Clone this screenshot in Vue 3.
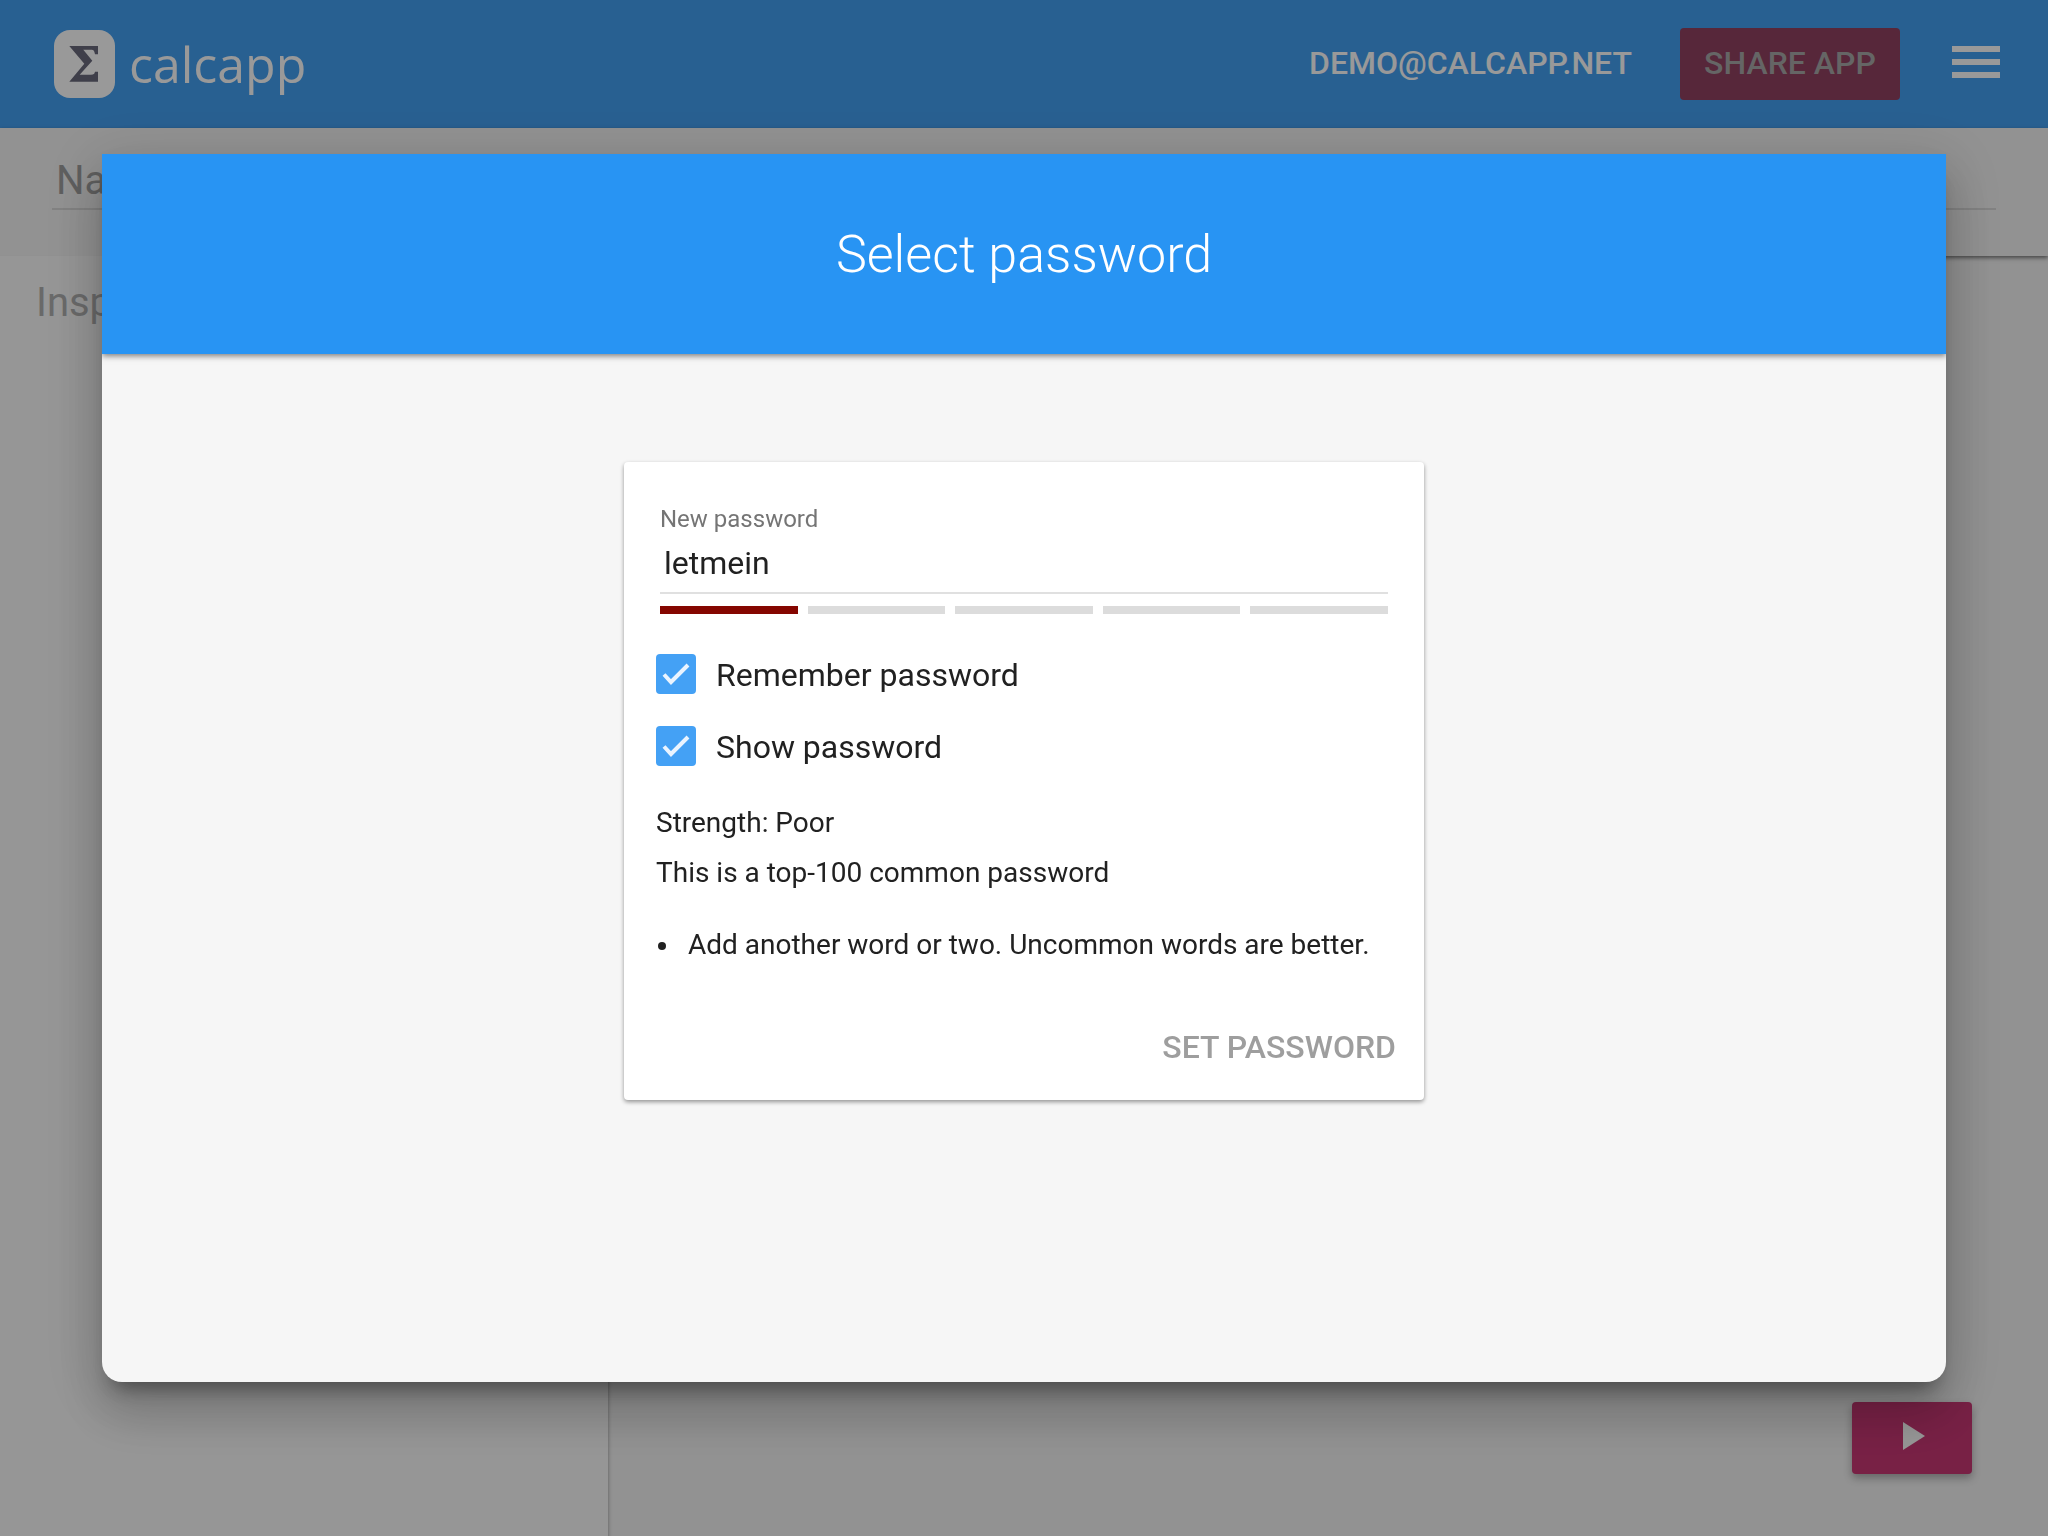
<script setup>
import { ref } from 'vue'

const password = ref('letmein')
const remember = ref(true)
const show = ref(true)
const appName = ref('')
const score = 1
</script>

<template>
  <div class="app">
    <header class="topbar">
      <a class="brand" href="#">
        <svg class="brand-mark" viewBox="0 0 61 68" aria-hidden="true">
          <rect width="61" height="68" rx="16" fill="#ffffff" />
          <path
            d="M15.3 16H44v8.3h-3C40.4 21 39.8 19.700 37 19.700H29.300L38.300 30.700 25.700 44.700H37C39.800 44.700 40.400 44 41 41.700h3v10H15.300L30.300 33.700Z"
            fill="#6a6a7c"
          />
        </svg>
        <span class="brand-name">calcapp</span>
      </a>
      <nav class="top-actions">
        <button class="account" type="button">DEMO@CALCAPP.NET</button>
        <button class="share" type="button" disabled>SHARE APP</button>
        <button class="menu" type="button" aria-label="Menu">
          <svg viewBox="0 0 48 32" aria-hidden="true">
            <path d="M0 0H48V6H0ZM0 13H48V19H0ZM0 26H48V32H0Z" fill="#ffffff" />
          </svg>
        </button>
      </nav>
    </header>

    <div class="namebar">
      <input v-model="appName" class="name-input" type="text" placeholder="Name" aria-label="Name" />
    </div>

    <div class="workspace">
      <aside class="inspector">
        <h2>Inspector</h2>
      </aside>
      <main class="canvas">
        <button class="play" type="button" aria-label="Run app">
          <svg viewBox="0 0 22 28" aria-hidden="true"><path d="M0 0 22 14 0 28Z" fill="#fafafa" /></svg>
        </button>
      </main>
    </div>

    <div class="overlay">
      <section class="dialog" role="dialog" aria-labelledby="dialog-title">
        <header class="dialog-header">
          <h1 id="dialog-title">Select password</h1>
        </header>
        <div class="dialog-body">
          <form class="card" @submit.prevent>
            <div class="field">
              <label for="new-password">New password</label>
              <input id="new-password" v-model="password" :type="show ? 'text' : 'password'" />
              <div class="meter">
                <span v-for="n in 5" :key="n" :class="{ filled: n <= score }"></span>
              </div>
            </div>

            <div class="options">
              <label class="option">
                <input v-model="remember" type="checkbox" />
                <span class="box">
                  <svg v-if="remember" viewBox="0 0 40 40"><path d="M8 20.500 15 28 32 11" /></svg>
                </span>
                <span class="option-text">Remember password</span>
              </label>
              <label class="option">
                <input v-model="show" type="checkbox" />
                <span class="box">
                  <svg v-if="show" viewBox="0 0 40 40"><path d="M8 20.500 15 28 32 11" /></svg>
                </span>
                <span class="option-text">Show password</span>
              </label>
            </div>

            <div class="feedback">
              <p>Strength: Poor</p>
              <p>This is a top-100 common password</p>
              <ul>
                <li>Add another word or two. Uncommon words are better.</li>
              </ul>
            </div>

            <div class="card-actions">
              <button type="submit" disabled>SET PASSWORD</button>
            </div>
          </form>
        </div>
      </section>
    </div>
  </div>
</template>

<style>
body {
  margin: 0;
}
</style>

<style scoped>
* {
  box-sizing: border-box;
}

.app {
  display: flex;
  flex-direction: column;
  min-height: 100vh;
  background: #f3f3f3;
  color: #212121;
  font-family: Roboto, sans-serif;
}

button,
input {
  margin: 0;
  border: 0;
  font-family: inherit;
}

h1,
h2,
p,
ul {
  margin: 0;
}

.topbar {
  display: flex;
  align-items: center;
  justify-content: space-between;
  height: 128px;
  padding: 0 48px 0 54px;
  background: #44a0f2;
}

.brand {
  display: flex;
  align-items: center;
  gap: 14px;
  color: #ffffff;
  text-decoration: none;
}

.brand-mark {
  width: 61px;
  height: 68px;
}

.brand-name {
  font: 500 50px/68px "Open Sans", sans-serif;
}

.top-actions {
  display: flex;
  align-items: center;
}

.top-actions button {
  height: 72px;
  font-size: 32px;
  font-weight: 500;
}

.account {
  padding: 0 16px 2px;
  background: none;
  color: #ffffff;
}

.share {
  width: 220px;
  margin: 0 52px 0 32px;
  padding: 0 0 2px;
  border-radius: 4px;
  background: #914161;
  color: #a8a8a8;
}

.menu {
  display: flex;
  align-items: center;
  padding: 0 0 4px;
  background: none;
}

.menu svg {
  width: 48px;
  height: 32px;
}

.namebar {
  height: 128px;
  padding: 24px 52px 0;
  background: #f3f3f3;
  box-shadow: 0 2px 4px rgba(0, 0, 0, 0.5);
}

.name-input {
  width: 100%;
  height: 58px;
  padding: 0 4px;
  border-bottom: 2px solid #d8d8d8;
  background: none;
  font-size: 40px;
}

.name-input::placeholder {
  color: #9e9e9e;
}

.workspace {
  display: flex;
  flex: 1;
}

.inspector {
  position: relative;
  width: 608px;
  padding: 23px 36px;
  background: #fafafa;
  box-shadow: 0 4px 4px rgba(0, 0, 0, 0.4);
}

.inspector h2 {
  color: #b0b0b0;
  font-size: 40px;
  font-weight: 400;
  line-height: 48px;
}

.canvas {
  display: flex;
  flex: 1;
  align-items: flex-end;
  justify-content: flex-end;
  padding: 0 76px 62px;
}

.play {
  display: flex;
  align-items: center;
  justify-content: center;
  width: 120px;
  height: 72px;
  padding: 0 0 4px 4px;
  border-radius: 4px;
  background: #c83774;
  box-shadow: 0 4px 8px rgba(0, 0, 0, 0.3);
}

.play svg {
  width: 22px;
  height: 28px;
}

.overlay {
  position: fixed;
  inset: 0;
  display: flex;
  align-items: center;
  justify-content: center;
  background: rgba(0, 0, 0, 0.4);
}

.dialog {
  display: flex;
  flex-direction: column;
  width: 90%;
  height: 80%;
  overflow: hidden;
  border-radius: 0 0 20px 20px;
  background: #f6f6f6;
  box-shadow:
    0 32px 48px 4px rgba(0, 0, 0, 0.14),
    0 12px 60px 10px rgba(0, 0, 0, 0.12),
    0 16px 20px -10px rgba(0, 0, 0, 0.4);
}

.dialog-header {
  display: flex;
  flex: none;
  align-items: center;
  justify-content: center;
  height: 200px;
  padding-top: 2px;
  background: #2894f3;
  box-shadow: 0 2px 6px rgba(0, 0, 0, 0.5);
}

.dialog-header h1 {
  color: #ffffff;
  font-size: 52px;
  font-weight: 300;
  line-height: 64px;
}

.dialog-body {
  padding: 108px 32px 32px;
}

.card {
  max-width: 800px;
  margin: 0 auto;
  padding: 43px 0 17px;
  border-radius: 4px;
  background: #ffffff;
  box-shadow: 0 2px 4px rgba(0, 0, 0, 0.4);
}

.field {
  display: flex;
  flex-direction: column;
  padding: 0 36px;
}

.field label {
  margin-bottom: 7px;
  color: #757575;
  font-size: 24px;
  line-height: 28px;
}

.field input {
  padding: 4px 4px 10px;
  border-bottom: 2px solid #e0e0e0;
  background: none;
  color: #212121;
  font-size: 32px;
  line-height: 38px;
}

.meter {
  display: flex;
  gap: 10px;
  margin-top: 12px;
}

.meter span {
  flex: 1;
  height: 8px;
  background: #dcdcdc;
}

.meter .filled {
  background: #850600;
}

.options {
  display: flex;
  flex-direction: column;
  gap: 32px;
  padding: 40px 32px 32px;
}

.option {
  position: relative;
  display: flex;
  gap: 20px;
  height: 40px;
  font-size: 32px;
  line-height: 42px;
}

.option input {
  position: absolute;
  width: 40px;
  height: 40px;
  opacity: 0;
}

.box {
  width: 40px;
  height: 40px;
  border-radius: 4px;
  background: #44a1f5;
}

.box svg {
  display: block;
  fill: none;
  stroke: #eaf4ff;
  stroke-width: 4;
}

.feedback {
  padding: 0 32px;
  font-size: 28px;
  line-height: 50px;
}

.feedback ul {
  margin-top: 22px;
  padding: 0;
  list-style: none;
}

.feedback li {
  display: flex;
  align-items: center;
}

.feedback li::before {
  flex: none;
  width: 8px;
  height: 8px;
  margin: 2px 22px 0 2px;
  border-radius: 50%;
  background: #212121;
  content: "";
}

.card-actions {
  display: flex;
  justify-content: flex-end;
  margin-top: 41px;
  padding: 0 12px;
}

.card-actions button {
  height: 72px;
  padding: 0 16px;
  background: none;
  color: #9e9e9e;
  font-size: 32px;
  font-weight: 500;
}
</style>
